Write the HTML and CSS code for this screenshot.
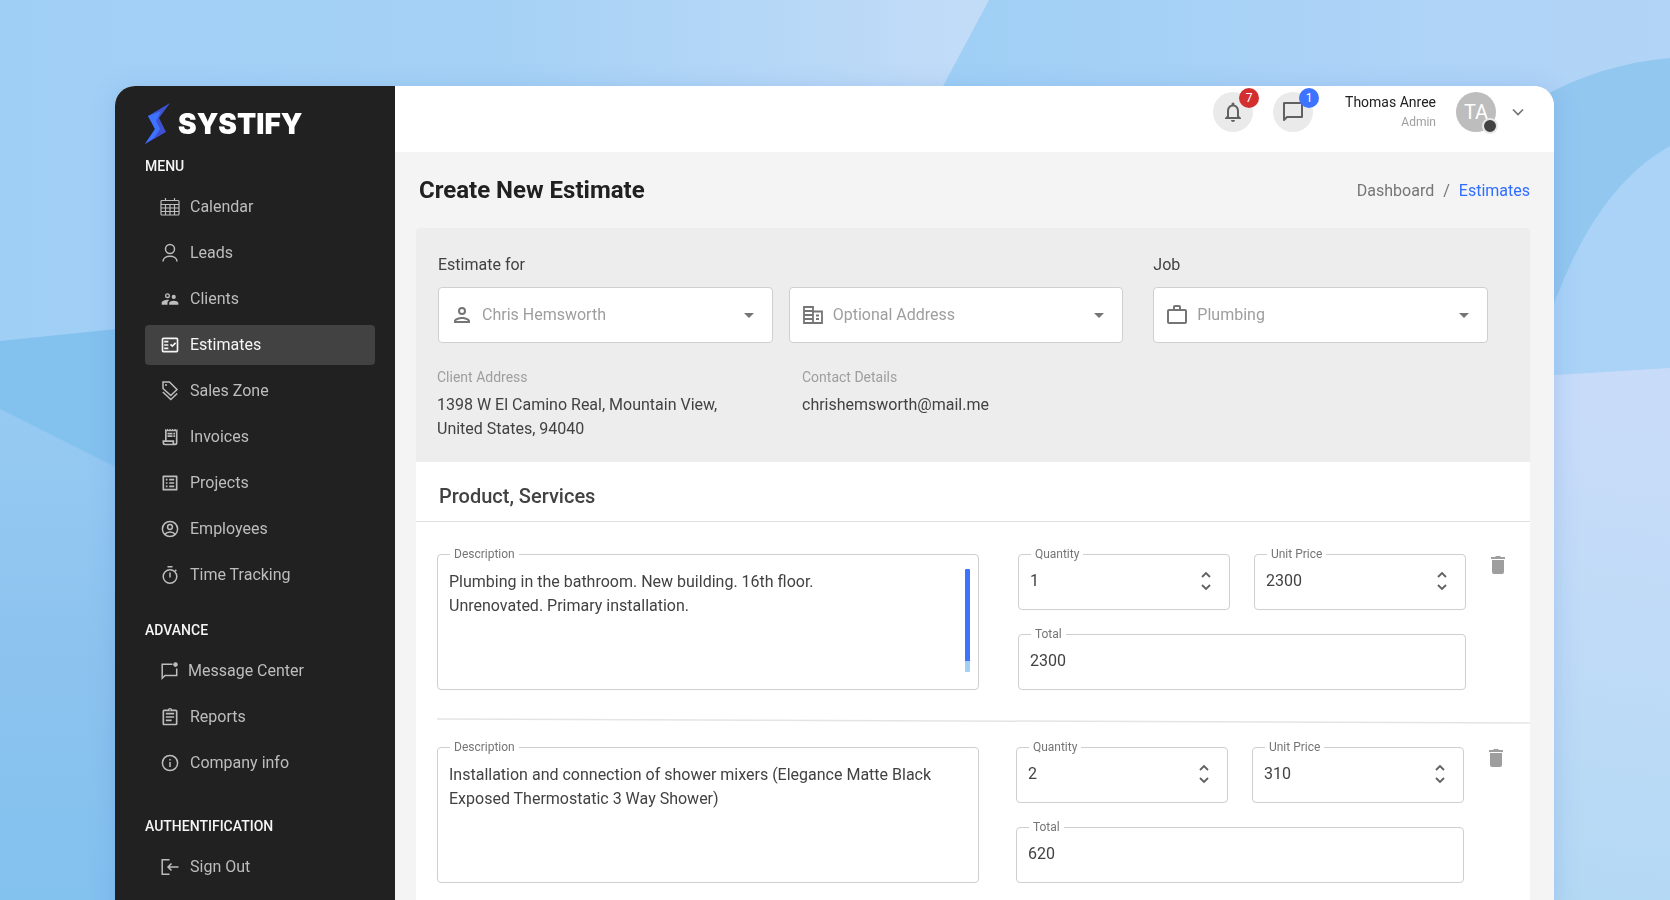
FILE: index.html
```html
<!DOCTYPE html>
<html lang="en">
<head>
<meta charset="utf-8">
<meta name="viewport" content="width=device-width, initial-scale=1">
<title>Create New Estimate – Systify</title>
<link rel="stylesheet" href="styles.css">
</head>
<body>
<svg class="backdrop" viewBox="0 0 1670 900" preserveAspectRatio="none" aria-hidden="true">
  <defs>
    <linearGradient id="bg-top" x1="0" y1="0" x2="1" y2="0"><stop offset="0" stop-color="#a0cff6"/><stop offset="0.3" stop-color="#a5d1f5"/><stop offset="0.58" stop-color="#c2dcf8"/></linearGradient>
    <linearGradient id="bg-low" gradientUnits="userSpaceOnUse" x1="0" y1="409" x2="0" y2="900"><stop offset="0" stop-color="#96caf3"/><stop offset="0.5" stop-color="#8cc3ee"/><stop offset="1" stop-color="#83c1ef"/></linearGradient>
    <linearGradient id="bg-right" x1="0" y1="0" x2="1" y2="0"><stop offset="0" stop-color="#9fcff5"/><stop offset="0.600" stop-color="#add3f7"/><stop offset="1" stop-color="#b2d4f6"/></linearGradient>
    <linearGradient id="bg-corner" gradientUnits="userSpaceOnUse" x1="1670" y1="430" x2="1600" y2="900"><stop offset="0" stop-color="#c8dcf9"/><stop offset="1" stop-color="#b4d9f4"/></linearGradient>
  </defs>
  <rect width="1670" height="900" fill="url(#bg-top)"/>
  <path d="M0 341L400 300V900H0z" fill="#83c1ee"/>
  <path d="M0 409L400 610V900H0z" fill="url(#bg-low)"/>
  <path d="M989 0H1670V900H1300L943 86z" fill="url(#bg-right)"/>
  <path d="M1540 98Q1600 64 1670 58V400H1540z" fill="#92c7f0"/>
  <path d="M1540 345C1563 270 1600 185 1670 146V400H1540z" fill="#abd3f7"/>
  <path d="M1540 376L1670 368V900H1540z" fill="url(#bg-corner)"/>
</svg>
<div class="app">
  <aside class="sidebar">
    <a class="logo" href="#">
      <svg width="26" height="41" viewBox="0 0 26 41" aria-hidden="true"><path d="M25 0L3 13L10 26L0 41L21 29L14 15Z" fill="#3f51d0"/><path d="M3 13L16 8L11 18L15 26L9 35L0 41L10 26Z" fill="#3d73ff"/></svg>
      <span>SYSTIFY</span>
    </a>
    <nav>
      <h2 class="nav-title">Menu</h2>
      <ul class="nav-list">
        <li><a href="#"><svg viewBox="0 0 20 20"><path d="M2 3.500h16a1 1 0 0 1 1 1V17a1 1 0 0 1-1 1H2a1 1 0 0 1-1-1V4.500a1 1 0 0 1 1-1zM1 7.500h18M1 11h18M1 14.500h18M5.500 1v3M14.500 1v3M5.500 7.500V18M10 7.500V18M14.500 7.500V18" class="line thin"/></svg>Calendar</a></li>
        <li><a href="#"><svg viewBox="0 0 20 20"><circle cx="10" cy="6" r="4.500" class="line"/><path d="M3 18.500c0-7 14-7 14 0" class="line"/></svg>Leads</a></li>
        <li><a href="#"><svg viewBox="0 0 24 24"><path d="M16.500 12a2.500 2.500 0 1 0 0-5 2.500 2.500 0 0 0 0 5zM9 11a3 3 0 1 0 0-6 3 3 0 0 0 0 6zm0-4.400a1.400 1.400 0 1 1 0 2.800 1.400 1.400 0 0 1 0-2.800zM16.500 14c-1.800 0-5.500.9-5.500 2.800V19h11v-2.200c0-1.800-3.700-2.800-5.500-2.800zM9 13c-2.300 0-7 1.200-7 3.500V19h7v-2.200c0-.9.300-2.300 2.400-3.500C10.500 13.100 9.700 13 9 13z" fill-rule="evenodd"/></svg>Clients</a></li>
        <li><a href="#" class="active" aria-current="page"><svg viewBox="0 0 24 24"><path d="M20 3H4a2 2 0 0 0-2 2v14a2 2 0 0 0 2 2h16a2 2 0 0 0 2-2V5a2 2 0 0 0-2-2zm0 16H4V5h16v14zM19.400 10.200L18 8.800l-3.200 3.200-1.500-1.500-1.400 1.400 2.900 2.900zM5 7h5v2H5zM5 11h5v2H5zM5 15h5v2H5z" fill-rule="evenodd"/></svg>Estimates</a></li>
        <li><a href="#"><svg viewBox="0 0 20 20"><path d="M3 1h6.500L17 8.500 10.800 14.500 3 7.500zM2.800 11l8 7.500L17.200 12.500" class="line"/><circle cx="6" cy="4" r="1"/></svg>Sales Zone</a></li>
        <li><a href="#"><svg viewBox="0 0 24 24"><path d="M19.500 3.500L18 2l-1.500 1.500L15 2l-1.500 1.500L12 2l-1.500 1.500L9 2 7.500 3.500 6 2v14H3v3a3 3 0 0 0 3 3h12a3 3 0 0 0 3-3V2zM15 20H6a1 1 0 0 1-1-1v-1h10zm4-1a1 1 0 0 1-2 0v-3H8V5h11zM9 7h6v2H9zM16 7h2v2h-2zM9 10h6v2H9zM16 10h2v2h-2z" fill-rule="evenodd"/></svg>Invoices</a></li>
        <li><a href="#"><svg viewBox="0 0 24 24"><path d="M19 5v14H5V5zM20 3H4a1 1 0 0 0-1 1v16a1 1 0 0 0 1 1h16a1 1 0 0 0 1-1V4a1 1 0 0 0-1-1zM11 7h6v2h-6zM11 11h6v2h-6zM11 15h6v2h-6zM7 7h2v2H7zM7 11h2v2H7zM7 15h2v2H7z" fill-rule="evenodd"/></svg>Projects</a></li>
        <li><a href="#"><svg viewBox="0 0 20 20"><circle cx="10" cy="10" r="7.600" class="line"/><circle cx="10" cy="8" r="2.400" class="line"/><path d="M4.800 15.200c2.600-3 7.800-3 10.400 0" class="line"/></svg>Employees</a></li>
        <li><a href="#"><svg viewBox="0 0 20 20"><circle cx="10" cy="11.500" r="6.800" class="line"/><path d="M7.500 1.800h5M10 7.500v5M15 6.200l1.300-1.300" class="line"/></svg>Time Tracking</a></li>
      </ul>
      <h2 class="nav-title advance">Advance</h2>
      <ul class="nav-list">
        <li><a href="#" class="message"><svg viewBox="0 0 20 20"><path d="M12.500 3.300H2.200v14l2.800-2.800h11.700V7.500" class="line"/><circle cx="15.500" cy="3.600" r="2.300"/></svg>Message Center</a></li>
        <li><a href="#"><svg viewBox="0 0 24 24"><path d="M7 15h7v2H7zM7 11h10v2H7zM7 7h10v2H7zM19 3h-4.200a3 3 0 0 0-5.600 0H5a2 2 0 0 0-2 2v15c0 1.100.9 2 2 2h14a2 2 0 0 0 2-2V5a2 2 0 0 0-2-2zm-7-.3a.8.800 0 1 1 0 1.600.8.800 0 0 1 0-1.600zM19 20H5V5h14z" fill-rule="evenodd"/></svg>Reports</a></li>
        <li><a href="#"><svg viewBox="0 0 20 20"><circle cx="10" cy="10" r="7.600" class="line"/><path d="M10 9v5M10 6v1.600" class="line"/></svg>Company info</a></li>
      </ul>
      <h2 class="nav-title">Authentification</h2>
      <ul class="nav-list">
        <li><a href="#"><svg viewBox="0 0 20 20"><path d="M9.500 2.800H2.200v14.400h7.300M18.500 10H8M11.500 6.500L8 10l3.500 3.500" class="line"/></svg>Sign Out</a></li>
      </ul>
    </nav>
  </aside>
  <div class="content">
    <header class="topbar">
      <button class="round" type="button" aria-label="Notifications"><svg viewBox="0 0 24 24"><path d="M12 22a2 2 0 0 0 2-2h-4c0 1.100.9 2 2 2zm6-6v-5c0-3.100-1.600-5.600-4.500-6.300V4a1.500 1.500 0 0 0-3 0v.7C7.600 5.400 6 7.900 6 11v5l-2 2v1h16v-1zm-2 1H8v-6c0-2.500 1.500-4.500 4-4.500s4 2 4 4.500z"/></svg><span class="badge red">7</span></button>
      <button class="round" type="button" aria-label="Messages"><svg viewBox="0 0 24 24"><path d="M3 3h18v14H6l-3 3z" fill="none" stroke="currentColor" stroke-width="2" stroke-linejoin="round"/></svg><span class="badge blue">1</span></button>
      <div class="user"><span class="user-name">Thomas Anree</span><span class="user-role">Admin</span></div>
      <button class="account" type="button" aria-label="Account menu"><span class="avatar">TA</span><svg viewBox="0 0 12 12"><path d="M1 3.500l5 5 5-5" fill="none" stroke="currentColor" stroke-width="1.700"/></svg></button>
    </header>
    <main class="page">
      <div class="page-head">
        <h1>Create New Estimate</h1>
        <nav class="crumbs" aria-label="Breadcrumb"><a href="#">Dashboard</a><span>/</span><a href="#" class="current">Estimates</a></nav>
      </div>
      <section class="client">
        <div class="pickers">
          <div class="picker">
            <label for="client">Estimate for</label>
            <div class="select"><svg viewBox="0 0 24 24"><path d="M12 6a2 2 0 1 1 0 4 2 2 0 0 1 0-4m0 10c2.700 0 5.800 1.300 6 2H6c.2-.7 3.300-2 6-2m0-12a4 4 0 1 0 0 8 4 4 0 0 0 0-8zm0 10c-2.700 0-8 1.300-8 4v2h16v-2c0-2.700-5.300-4-8-4z"/></svg><select id="client"><option>Chris Hemsworth</option></select></div>
          </div>
          <div class="picker">
            <div class="select"><svg viewBox="0 0 24 24"><path d="M3 4h9v16H3zM3 8h9M3 12h9M3 16h9M12 8.500h9V20h-9M15 12.500h3M15 16h3" fill="none" stroke="currentColor" stroke-width="1.800"/></svg><select id="address" aria-label="Address"><option>Optional Address</option></select></div>
          </div>
          <div class="picker job">
            <label for="job">Job</label>
            <div class="select"><svg viewBox="0 0 24 24"><path d="M14 6V4h-4v2zM4 8v11h16V8zm16-2a2 2 0 0 1 2 2v11a2 2 0 0 1-2 2H4a2 2 0 0 1-2-2V8c0-1.100.9-2 2-2h4V4c0-1.100.9-2 2-2h4a2 2 0 0 1 2 2v2z" fill-rule="evenodd"/></svg><select id="job"><option>Plumbing</option></select></div>
          </div>
        </div>
        <dl class="details">
          <div><dt>Client Address</dt><dd>1398 W El Camino Real, Mountain View,<br>United States, 94040</dd></div>
          <div><dt>Contact Details</dt><dd>chrishemsworth@mail.me</dd></div>
        </dl>
      </section>
      <section class="products">
        <h2>Product, Services</h2>
        <div class="item">
          <fieldset class="field description">
            <legend><label for="d1">Description</label></legend>
            <textarea id="d1">Plumbing in the bathroom. New building. 16th floor.
Unrenovated. Primary installation.</textarea>
            <span class="track"></span>
          </fieldset>
          <div class="numbers">
            <fieldset class="field"><legend><label for="q1">Quantity</label></legend><input id="q1" value="1"><svg viewBox="0 0 10 20"><path d="M1 6l4-4 4 4M1 14l4 4 4-4"/></svg></fieldset>
            <fieldset class="field"><legend><label for="p1">Unit Price</label></legend><input id="p1" value="2300"><svg viewBox="0 0 10 20"><path d="M1 6l4-4 4 4M1 14l4 4 4-4"/></svg></fieldset>
            <fieldset class="field total"><legend><label for="t1">Total</label></legend><input id="t1" value="2300"></fieldset>
          </div>
          <button class="delete" type="button" aria-label="Delete item"><svg viewBox="0 0 14 18"><path d="M1 4h12v12a2 2 0 0 1-2 2H3a2 2 0 0 1-2-2zM0 1h4l1-1h4l1 1h4v2H0z"/></svg></button>
        </div>
        <svg class="rule" viewBox="0 0 1093 6" preserveAspectRatio="none" aria-hidden="true"><path d="M0 1L1093 5" stroke="#e4e4e4" stroke-width="1.500"/></svg>
        <div class="item second">
          <fieldset class="field description">
            <legend><label for="d2">Description</label></legend>
            <textarea id="d2">Installation and connection of shower mixers (Elegance Matte Black Exposed Thermostatic 3 Way Shower)</textarea>
          </fieldset>
          <div class="numbers">
            <fieldset class="field"><legend><label for="q2">Quantity</label></legend><input id="q2" value="2"><svg viewBox="0 0 10 20"><path d="M1 6l4-4 4 4M1 14l4 4 4-4"/></svg></fieldset>
            <fieldset class="field"><legend><label for="p2">Unit Price</label></legend><input id="p2" value="310"><svg viewBox="0 0 10 20"><path d="M1 6l4-4 4 4M1 14l4 4 4-4"/></svg></fieldset>
            <fieldset class="field total"><legend><label for="t2">Total</label></legend><input id="t2" value="620"></fieldset>
          </div>
          <button class="delete" type="button" aria-label="Delete item"><svg viewBox="0 0 14 18"><path d="M1 4h12v12a2 2 0 0 1-2 2H3a2 2 0 0 1-2-2zM0 1h4l1-1h4l1 1h4v2H0z"/></svg></button>
        </div>
      </section>
    </main>
  </div>
</div>
</body>
</html>
```
FILE: styles.css
```css
* { box-sizing: border-box; }
html { height: 100%; }
body {
  margin: 0;
  height: 100%;
  overflow: hidden;
  padding: 86px 116px 0 115px;
  font-family: Roboto, "Liberation Sans", sans-serif;
  font-size: 16px;
  line-height: 24px;
  color: #424242;
}
a { color: inherit; text-decoration: none; }
button { border: 0; padding: 0; background: none; font: inherit; cursor: pointer; }
svg { display: block; fill: currentColor; flex: none; }
h1, h2, ul, dl, dd { margin: 0; padding: 0; }
ul { list-style: none; }

.backdrop { position: fixed; inset: 0; width: 100%; height: 100%; z-index: -1; }

.app {
  display: flex;
  min-height: 100%;
  border-radius: 20px 20px 0 0;
  overflow: hidden;
  background: #f4f4f4;
  box-shadow: 0 4px 24px rgba(80, 130, 210, 0.25);
}

/* Sidebar */
.sidebar {
  flex: none;
  width: 280px;
  padding: 17px 20px 0 30px;
  background: #212121;
  color: #bdbdbd;
}
.logo { display: flex; align-items: center; gap: 7px; height: 41px; color: #fff; }
.logo span { font-family: Inter, sans-serif; font-weight: 900; font-size: 28px; line-height: 36px; }
.nav-title {
  margin-top: 33px;
  font-size: 14px;
  font-weight: 500;
  line-height: 20px;
  color: #f5f5f5;
  text-transform: uppercase;
}
.nav-title:first-child { margin-top: 12px; }
.nav-title.advance { margin-top: 25px; }
.nav-list { display: flex; flex-direction: column; gap: 6px; margin: 11px 0 0; }
.nav-list a {
  display: flex;
  align-items: center;
  gap: 10px;
  height: 40px;
  padding-left: 15px;
  border-radius: 4px;
}
.nav-list svg { width: 20px; height: 20px; }
.nav-list .active { background: #424242; color: #f5f5f5; }
.nav-list .message { gap: 8px; }
.line { fill: none; stroke: currentColor; stroke-width: 1.500; }
.thin { stroke-width: 1.200; }

/* Header */
.content { flex: 1; min-width: 0; }
.topbar {
  display: flex;
  justify-content: flex-end;
  align-items: flex-start;
  height: 66px;
  padding: 6px 30px 0 0;
  background: #fff;
}
.round {
  position: relative;
  display: grid;
  place-items: center;
  width: 40px;
  height: 40px;
  margin-right: 20px;
  border-radius: 50%;
  background: #eaeaea;
  color: #616161;
}
.round svg { width: 24px; height: 24px; }
.badge {
  position: absolute;
  top: -4px;
  right: -6px;
  width: 20px;
  height: 20px;
  border-radius: 50%;
  color: #fff;
  font-size: 12px;
  line-height: 20px;
  text-align: center;
}
.red { background: #d32f2f; }
.blue { background: #3d73ff; }
.user { display: flex; flex-direction: column; margin: 0 20px 0 12px; text-align: right; }
.user-name { font-size: 14px; line-height: 20px; color: #212121; }
.user-role { font-size: 12px; line-height: 20px; color: #9e9e9e; }
.account { display: flex; align-items: center; gap: 16px; color: #757575; }
.account svg { width: 12px; height: 12px; }
.avatar {
  position: relative;
  width: 40px;
  height: 40px;
  border-radius: 50%;
  background: #bdbdbd;
  color: #fff;
  font-size: 20px;
  line-height: 40px;
}
.avatar::after {
  content: "";
  position: absolute;
  right: -2px;
  bottom: -2px;
  width: 12px;
  height: 12px;
  border: 2px solid #e8e8e8;
  border-radius: 50%;
  background: #424242;
}

/* Page */
.page { padding: 0 24px 0 21px; }
.page-head { display: flex; justify-content: space-between; align-items: center; height: 76px; padding-left: 3px; }
h1 { font-size: 24px; font-weight: 700; line-height: 32px; color: #212121; }
.crumbs { display: flex; gap: 9px; padding-top: 1px; color: #757575; }
.crumbs .current { color: #2f6cff; }

.client { height: 234px; padding: 25px 42px 0 22px; border-radius: 4px 4px 0 0; background: #ededed; }
.pickers { display: flex; align-items: flex-end; gap: 16px; }
.picker { flex: 1; display: flex; flex-direction: column; gap: 10px; }
.job { margin-left: 14px; }
.select { position: relative; display: flex; align-items: center; }
.select svg { position: absolute; left: 12px; width: 24px; height: 24px; color: #757575; pointer-events: none; }
.select select {
  width: 100%;
  height: 56px;
  padding: 0 43px;
  border: 1px solid #cfcfcf;
  border-radius: 4px;
  background: #fff;
  color: #9e9e9e;
  font: inherit;
  appearance: none;
}
.select::after {
  content: "";
  position: absolute;
  right: 19px;
  border: 5px solid transparent;
  border-top-color: #757575;
  border-bottom: 0;
}
.details { display: flex; margin-left: -1px; padding-top: 22px; }
.details > div { width: 365px; }
.details dt { font-size: 14px; line-height: 24px; color: #9e9e9e; }
.details dd { padding-top: 4px; }

.products { background: #fff; }
.products h2 {
  height: 60px;
  padding: 4px 23px 0;
  border-bottom: 1px solid #e0e0e0;
  font-size: 20px;
  font-weight: 500;
  line-height: 60px;
}
.item { display: flex; align-items: flex-start; padding: 23px 25px 28px 21px; }
.field {
  position: relative;
  min-width: 0;
  margin: 0;
  padding: 0;
  border: 1px solid #cfcfcf;
  border-radius: 4px;
}
.field legend {
  height: 18px;
  margin-left: 12px;
  padding: 0 4px;
  font-size: 12px;
  line-height: 18px;
  color: #757575;
}
.field input, .field textarea {
  display: block;
  width: 100%;
  border: 0;
  background: none;
  color: #424242;
  font: inherit;
  outline: 0;
  resize: none;
}
.field input { height: 46px; padding: 0 40px 11px 11px; }
.field textarea { height: 126px; padding: 7px 20px 0 11px; overflow: hidden; }
.description { flex: 541; }
.numbers { flex: 449; display: grid; grid-template-columns: 1fr 1fr; gap: 15px 24px; margin: 0 25px 0 39px; }
.second .numbers { margin: 0 27px 0 37px; }
.total { grid-column: 1 / -1; }
.field svg {
  position: absolute;
  right: 18px;
  top: 8px;
  width: 10px;
  height: 20px;
  fill: none;
  stroke: #616161;
  stroke-width: 1.800;
}
.track {
  position: absolute;
  right: 8px;
  top: 6px;
  width: 5px;
  height: 103px;
  border-radius: 1px;
  background: linear-gradient(#3d73ff 89%, #a3d0f5 89%);
}
.delete { padding-top: 11px; color: #9e9e9e; }
.delete svg { width: 14px; height: 18px; }
.second .delete { margin-left: -2px; margin-right: 2px; }
.rule { width: calc(100% - 21px); height: 6px; margin: 0 0 -9px 21px; }
```
